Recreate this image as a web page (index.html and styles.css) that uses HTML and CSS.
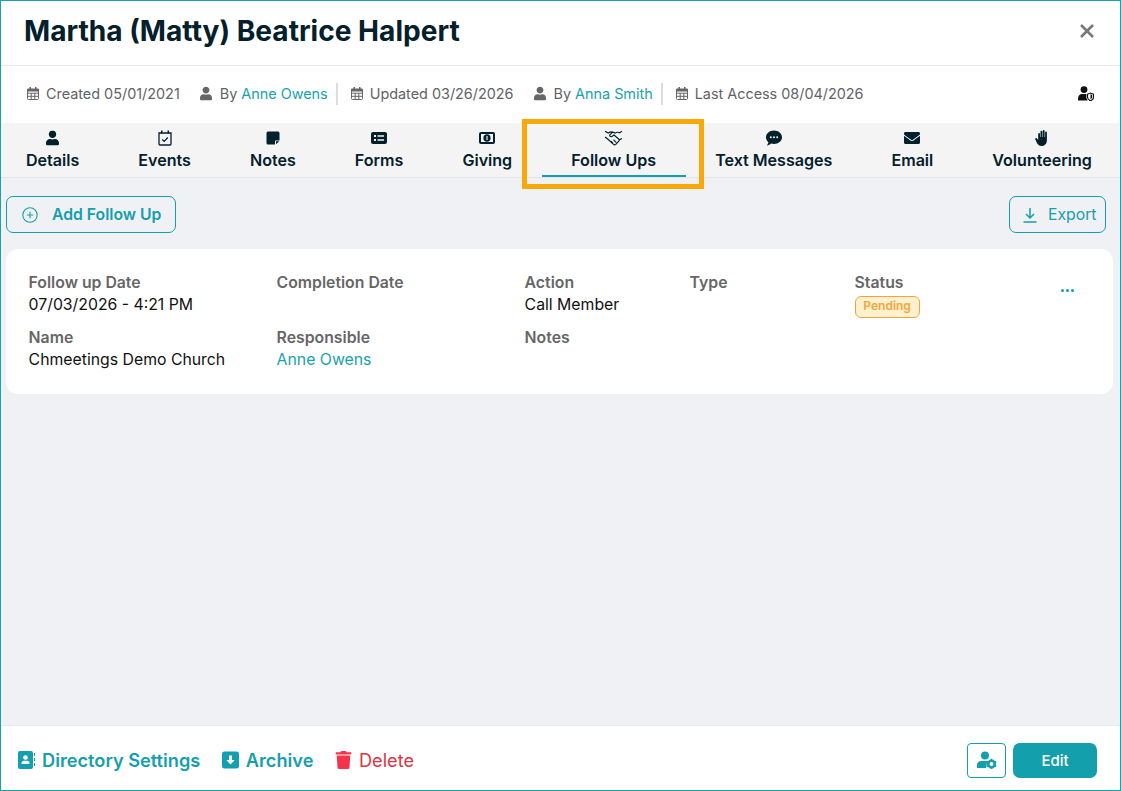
FILE: index.html
```html
<!DOCTYPE html>
<html>
<head>
<meta charset="UTF-8">
<title>Martha (Matty) Beatrice Halpert</title>
<link rel="stylesheet" href="styles.css">
</head>
<body>
<svg class="defs" width="0" height="0">
	<symbol id="i-cal" viewBox="0 0 12 13">
		<path fill="none" stroke="currentColor" stroke-width="1" d="M.5 2h11v9.500a1 1 0 0 1-1 1h-9a1 1 0 0 1-1-1zM.5 6.200h11M.5 9.300h11M4.200 6.200v6.300M7.800 6.200v6.300"/>
		<path fill="currentColor" d="M2.500 0h1.500v2H2.500zM8 0h1.500v2H8zM.5 2h11v2.500H.5z"/>
	</symbol>
	<symbol id="i-user" viewBox="0 0 448 512">
		<path fill="currentColor" d="M224 256c70.700 0 128-57.300 128-128S294.700 0 224 0 96 57.300 96 128s57.300 128 128 128zm89.600 32h-16.700c-22.200 10.200-46.900 16-72.900 16s-50.600-5.800-72.900-16h-16.700C60.200 288 0 348.200 0 422.400V464c0 26.500 21.500 48 48 48h352c26.500 0 48-21.500 48-48v-41.600c0-74.200-60.200-134.400-134.400-134.400z"/>
	</symbol>
</svg>

<div class="modal">
	<header class="top">
		<h1>Martha (Matty) Beatrice Halpert</h1>
		<svg class="close" viewBox="0 0 16 16"><path d="M2 2l12 12M14 2L2 14"/></svg>
	</header>

	<section class="meta">
		<span class="item"><svg class="ic-cal"><use href="#i-cal"/></svg>Created 05/01/2021</span>
		<span class="item by"><svg class="ic-user"><use href="#i-user"/></svg>By <a>Anne Owens</a></span>
		<span class="sep"></span>
		<span class="item"><svg class="ic-cal"><use href="#i-cal"/></svg>Updated 03/26/2026</span>
		<span class="item by"><svg class="ic-user"><use href="#i-user"/></svg>By <a>Anna Smith</a></span>
		<span class="sep"></span>
		<span class="item"><svg class="ic-cal"><use href="#i-cal"/></svg>Last Access 08/04/2026</span>
		<svg class="shield" viewBox="0 0 16 15">
			<circle cx="6" cy="3.600" r="3.400" fill="#111"/>
			<path fill="#111" d="M0 14.500v-2C0 9.800 1.800 8 4 8h3.500c.3 0 .6 0 .9.100V11c0 1.300.5 2.500 1.400 3.500z"/>
			<path fill="#fff" stroke="#111" stroke-width="1.100" d="M9.500 8.200l3-1.200 3 1.200V11c0 1.900-1.300 3.200-3 3.800-1.700-.6-3-1.900-3-3.800z"/>
			<path fill="#111" d="M12.500 8.300v4.900c.9-.5 1.600-1.300 1.600-2.300V9z"/>
		</svg>
	</section>

	<nav class="tabs">
		<a class="tab">
			<svg viewBox="0 0 448 512" class="person"><use href="#i-user"/></svg>
			Details
		</a>
		<a class="tab">
			<svg viewBox="0 0 14 16">
				<path fill="none" stroke="currentColor" stroke-width="1.300" d="M1 3h12v11a1 1 0 0 1-1 1H2a1 1 0 0 1-1-1z"/>
				<path fill="currentColor" d="M3 .5h1.500v3H3zM9.500.5H11v3H9.500z"/>
				<path fill="none" stroke="currentColor" stroke-width="1.200" d="M4.200 9.500l2 2 3.600-4"/>
			</svg>
			Events
		</a>
		<a class="tab">
			<svg viewBox="-1 -1 16 16"><path fill="currentColor" d="M2 .5h10A1.500 1.500 0 0 1 13.500 2v7.500H9.500a.5.5 0 0 0-.5.5v3.500H2A1.500 1.500 0 0 1 .5 12V2A1.500 1.500 0 0 1 2 .5zM10 13.300v-3h3.300z"/></svg>
			Notes
		</a>
		<a class="tab">
			<svg viewBox="0 0 16 12">
				<rect width="16" height="12" rx="2" fill="currentColor"/>
				<path fill="#f4f4f5" d="M3 3h2v2H3zM3 7h2v2H3zM6.500 3.300H13v1.400H6.500zM6.500 7.300H13v1.400H6.500z"/>
			</svg>
			Forms
		</a>
		<a class="tab">
			<svg viewBox="0 0 16 12">
				<rect width="16" height="12" rx="2" fill="currentColor"/>
				<rect x="2" y="2" width="12" height="8" fill="#f4f4f5"/>
				<ellipse cx="8" cy="6" rx="3.600" ry="3.800" fill="currentColor"/>
				<path fill="#f4f4f5" d="M7.400 4h1.200v4H7.400z"/>
			</svg>
			Giving
		</a>
		<a class="tab active">
			<svg viewBox="0 0 18 15" class="shake">
				<path d="M1 1l3 1.800c1.500-.9 3-1.300 4.200-.9l2.300.9c1.500-.8 3-1 4.500-.3L17 1M8 2.200L5.500 4.600c-.4 1 .8 2 2 1.400l2-1.300 5.200 4.500L17 8M1 6.500l2.500 2 5.500 5c.8.600 1.600.6 2.200 0l3.400-3.700"/>
				<path d="M6.500 10.500l2 2M9 9l2.700 2.800"/>
			</svg>
			Follow Ups
			<i class="mark"></i>
		</a>
		<a class="tab">
			<svg viewBox="0 0 16 16">
				<path fill="currentColor" d="M8 .5c4.400 0 8 2.900 8 6.700s-3.600 6.700-8 6.700c-1 0-2-.2-2.900-.4C4 14.400 2.600 15.500.7 15.500c1-1 1.600-2.300 1.700-3.200C1 11 0 9.200 0 7.200 0 3.400 3.600.5 8 .5z"/>
				<circle cx="4.800" cy="7.200" r="1" fill="#f4f4f5"/><circle cx="8" cy="7.200" r="1" fill="#f4f4f5"/><circle cx="11.200" cy="7.200" r="1" fill="#f4f4f5"/>
			</svg>
			Text Messages
		</a>
		<a class="tab">
			<svg viewBox="0 0 512 512"><path fill="currentColor" d="M502.300 190.800c3.900-3.100 9.700-.2 9.700 4.700V400c0 26.500-21.500 48-48 48H48c-26.500 0-48-21.500-48-48V195.600c0-5 5.700-7.800 9.700-4.700 22.400 17.400 52.100 39.500 154.100 113.600 21.100 15.400 56.700 47.800 92.200 47.600 35.700.3 72-32.800 92.300-47.600 102-74.100 131.600-96.300 154-113.700zM256 320c23.200.4 56.600-29.200 73.400-41.400 132.700-96.300 142.800-104.700 173.400-128.700 5.800-4.500 9.200-11.500 9.200-18.900v-19c0-26.500-21.500-48-48-48H48C21.500 64 0 85.500 0 112v19c0 7.400 3.400 14.300 9.200 18.900 30.600 23.900 40.700 32.400 173.400 128.700 16.800 12.200 50.200 41.800 73.400 41.400z"/></svg>
			Email
		</a>
		<a class="tab">
			<svg viewBox="0 0 14 16">
				<path fill="currentColor" d="M3.200 4a.9.9 0 0 1 1.800 0v3h.5V1.600a.9.9 0 0 1 1.800 0V7h.5V1a.9.9 0 0 1 1.800 0v6h.5V2.500a.9.900 0 0 1 1.800 0V10c0 3.500-2 6-5.200 6-2.400 0-3.500-1-4.800-3L.4 9.500c-.6-1 .8-2 1.600-1l1.200 1.500z"/>
			</svg>
			Volunteering
		</a>
	</nav>

	<main class="content">
		<div class="actions">
			<a class="btn add">
				<svg viewBox="0 0 16 16"><circle cx="8" cy="8" r="7.200"/><path d="M8 4.800v6.400M4.800 8h6.400"/></svg>
				Add Follow Up
			</a>
			<a class="btn export">
				<svg viewBox="0 0 14 16"><path d="M7 1v9.500M3 7l4 4 4-4M.5 15h13"/></svg>
				Export
			</a>
		</div>

		<div class="card">
			<div class="field"><b>Follow up Date</b><span>07/03/2026 - 4:21 PM</span></div>
			<div class="field"><b>Completion Date</b></div>
			<div class="field"><b>Action</b><span>Call Member</span></div>
			<div class="field"><b>Type</b></div>
			<div class="field"><b>Status</b><em class="badge">Pending</em></div>
			<div class="dots"><i></i><i></i><i></i></div>
			<div class="field"><b>Name</b><span>Chmeetings Demo Church</span></div>
			<div class="field"><b>Responsible</b><a>Anne Owens</a></div>
			<div class="field"><b>Notes</b></div>
		</div>
	</main>

	<footer class="bottom">
		<a class="link">
			<svg viewBox="0 0 17 18">
				<path fill="currentColor" d="M2 0h11a2 2 0 0 1 2 2v14a2 2 0 0 1-2 2H2a2 2 0 0 1-2-2V2a2 2 0 0 1 2-2z"/>
				<circle cx="7.500" cy="6.500" r="2.300" fill="#fff"/>
				<path fill="#fff" d="M3.500 13v-1c0-1.500 1-2.300 2.500-2.300h3c1.500 0 2.500.8 2.500 2.300v1z"/>
				<path fill="currentColor" d="M16 2h1v3h-1zM16 7h1v3h-1zM16 12h1v3h-1z"/>
			</svg>
			Directory Settings
		</a>
		<a class="link">
			<svg viewBox="0 0 17 17">
				<rect width="17" height="17" rx="2.500" fill="currentColor"/>
				<path fill="#fff" d="M7 4h3v4.500h2.700L8.500 13 4.300 8.500H7z"/>
			</svg>
			Archive
		</a>
		<a class="link del">
			<svg viewBox="0 0 448 512"><path fill="currentColor" d="M432 32H312l-9.400-18.700A24 24 0 0 0 281.100 0H166.800a23.720 23.720 0 0 0-21.400 13.300L136 32H16A16 16 0 0 0 0 48v32a16 16 0 0 0 16 16h416a16 16 0 0 0 16-16V48a16 16 0 0 0-16-16zM53.200 467a48 48 0 0 0 47.900 45h245.800a48 48 0 0 0 47.900-45L416 128H32z"/></svg>
			Delete
		</a>
		<a class="gear">
			<svg viewBox="0 0 20 18">
				<circle cx="8" cy="4.500" r="4" fill="currentColor"/>
				<path fill="currentColor" d="M0 17v-3c0-2.500 2-4 4-4h6.500l-1.500 7z"/>
				<circle cx="14.500" cy="13" r="3.200" fill="#fff" stroke="currentColor" stroke-width="2.600"/>
				<path stroke="currentColor" stroke-width="1.800" d="M14.500 7.800v2M14.500 16.200v2M9.800 10.500l1.800 1M17.400 14.500l1.800 1M9.800 15.500l1.800-1M17.400 11.500l1.800-1"/>
			</svg>
		</a>
		<a class="edit">Edit</a>
	</footer>
</div>
</body>
</html>
```

FILE: styles.css
```css
*{
	margin:0;
	padding:0;
	box-sizing:border-box;
}
body{
	font-family:"Inter","Noto Sans",sans-serif;
	color:#111;
	background:#fff;
}
.defs{
	position:absolute;
}
.modal{
	width:1121px;
	height:791px;
	border:1px solid #17a2ae;
	display:flex;
	flex-direction:column;
	overflow:hidden;
}
.top{
	height:65px;
	flex:none;
	border-bottom:1px solid #e8e9ec;
	display:flex;
	align-items:center;
	justify-content:space-between;
	padding:0 25px 4px 23px;
}
h1{
	font-size:28.100px;
	font-weight:700;
	line-height:34px;
	color:#04202b;
}
.close{
	width:16px;
	height:16px;
	fill:none;
	stroke:#777;
	stroke-width:2.600;
}
.meta{
	height:57px;
	flex:none;
	display:flex;
	align-items:center;
	padding:0 26px 2px;
	font-size:14.400px;
	color:#5f6368;
}
.item{
	display:flex;
	align-items:center;
	white-space:pre;
}
.item a{
	color:#17a2ae;
}
.by{
	margin-left:20px;
}
.ic-cal{
	width:12px;
	height:13px;
	margin-right:7px;
	color:#666;
}
.ic-user{
	width:12px;
	height:15px;
	margin-right:8px;
	color:#666;
}
.sep{
	width:2px;
	height:22px;
	background:#dcdcdc;
	margin:0 12.500px 0 8.500px;
}
.shield{
	width:16px;
	height:15px;
	margin-left:auto;
	margin-right:0;
}
.tabs{
	height:55px;
	flex:none;
	display:flex;
	background:#f4f4f5;
	border-bottom:1px solid #e2e4e9;
	color:#04202b;
}
.tab{
	position:relative;
	display:flex;
	flex-direction:column;
	align-items:center;
	padding:7px 29.500px 0;
	font-size:16.080px;
	font-weight:600;
	line-height:20px;
	white-space:nowrap;
}
.tab:first-child{
	padding-left:25px;
}
.tab svg{
	width:16px;
	height:16px;
	margin-bottom:4px;
}
.tab svg.person{
	width:13px;
}
.tab svg.shake{
	width:19px;
	fill:none;
	stroke:currentColor;
	stroke-width:1.100;
}
.active::before{
	content:"";
	position:absolute;
	left:-20px;
	right:-18px;
	top:-4px;
	bottom:-12px;
	border:5px solid #f9a80a;
	z-index:2;
}
.mark{
	position:absolute;
	left:0;
	right:0;
	bottom:0;
	height:2px;
	background:#149fac;
}
.content{
	flex:1;
	background:#f0f1f5;
	padding:18px 7px 0 5px;
}
.actions{
	display:flex;
	justify-content:space-between;
	margin-bottom:16px;
}
.btn{
	height:37px;
	border:1px solid #149fac;
	border-radius:7px;
	display:flex;
	align-items:center;
	color:#149fac;
	font-size:15.750px;
}
.add{
	width:170px;
	padding-left:15px;
	font-weight:600;
}
.add svg{
	width:16px;
	height:16px;
	margin-right:14px;
	fill:none;
	stroke:currentColor;
	stroke-width:1.100;
}
.export{
	width:97px;
	margin-right:7px;
	padding-left:13px;
}
.export svg{
	width:14px;
	height:16px;
	margin-right:11px;
	fill:none;
	stroke:currentColor;
	stroke-width:1.500;
}
.card{
	height:145px;
	background:#fff;
	border-radius:12px;
	padding:23px 0 0 22.600px;
	display:grid;
	grid-template-columns:248px 248px 165px 165px 206px 1fr;
	grid-template-rows:44px 44px;
	row-gap:11px;
	font-size:15.800px;
	line-height:22px;
}
.field b{
	display:block;
	font-weight:600;
	color:#666;
}
.field span{
	display:block;
}
.field a{
	color:#17a2ae;
}
.badge{
	display:block;
	width:65px;
	height:22px;
	margin-top:2px;
	border:1px solid #f0a73a;
	border-radius:6px;
	background:#fff0cf;
	color:#f0a73a;
	font-style:normal;
	font-weight:600;
	font-size:12px;
	line-height:18px;
	text-align:center;
}
.dots{
	display:flex;
	gap:2px;
	padding-top:17px;
	height:21px;
}
.dots i{
	width:3.200px;
	height:3.200px;
	border-radius:50%;
	background:#149fac;
}
.bottom{
	height:65px;
	flex:none;
	background:#fff;
	border-top:1px solid #e8e9ec;
	display:flex;
	align-items:center;
	padding:4px 23px 0 17px;
}
.link{
	display:flex;
	align-items:center;
	margin-right:21.500px;
	font-size:18.200px;
	font-weight:600;
	color:#149fac;
}
.link svg{
	width:17px;
	height:18px;
	margin-right:7px;
}
.link.del{
	font-weight:400;
	color:#dc3545;
}
.link.del svg{
	color:#f5334a;
}
.gear{
	width:39px;
	height:35px;
	margin-left:auto;
	border:1px solid #149fac;
	border-radius:4px;
	display:flex;
	align-items:center;
	justify-content:center;
	color:#149fac;
}
.gear svg{
	width:20px;
	height:18px;
}
.edit{
	width:84px;
	height:35px;
	margin-left:7px;
	background:#149fac;
	border-radius:7px;
	color:#fff;
	font-size:15px;
	font-weight:500;
	line-height:35px;
	text-align:center;
}
```
